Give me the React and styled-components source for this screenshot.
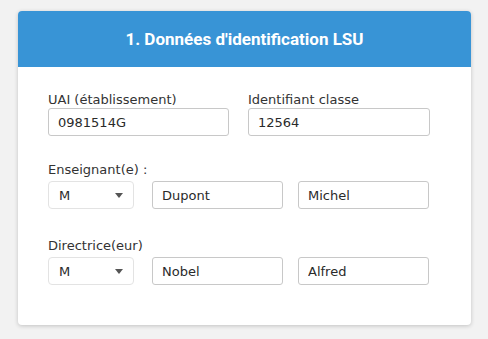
import React from "react";
import styled, { createGlobalStyle } from "styled-components";

const Global = createGlobalStyle`
  html, body { margin: 0; padding: 0; background: #f2f2f2; }
  body { font-family: "DejaVu Sans", Verdana, sans-serif; }
  * { box-sizing: border-box; }
`;

const Page = styled.div`
  padding: 11px 17px 13px 18px;
`;

const Card = styled.section`
  width: 453px;
  background: #fff;
  border-radius: 4px;
  overflow: hidden;
  box-shadow: 0 1px 4px rgba(0, 0, 0, 0.2);
`;

const Header = styled.h2`
  margin: 0;
  height: 56px;
  background: #3894d6;
  color: #fff;
  font-family: Roboto, "Liberation Sans", sans-serif;
  font-weight: 700;
  font-size: 17px;
  display: flex;
  align-items: center;
  justify-content: center;
`;

const Body = styled.div`
  padding: 25px 41px 40px 30px;
  display: flex;
  flex-direction: column;
`;

const Row = styled.div`
  display: grid;
  grid-template-columns: ${(p) => p.$cols};
  column-gap: ${(p) => p.$gap};
  align-items: end;
  margin-top: ${(p) => p.$top || "0px"};
`;

const Field = styled.div`
  display: flex;
  flex-direction: column;
  gap: 1px;
`;

const Label = styled.label`
  font-size: 13px;
  color: #333;
  line-height: 15px;
`;

const GroupLabel = styled(Label)`
  grid-column: 1 / -1;
  margin-bottom: 4px;
`;

const Input = styled.input`
  height: 28px;
  width: 100%;
  border: 1px solid #c8c8c8;
  border-radius: 3px;
  padding: 0 9px;
  font-family: "DejaVu Sans", Verdana, sans-serif;
  font-size: 13px;
  color: #2a2a2a;
  background: #fff;
  outline: none;
`;

const SelectBox = styled.div`
  width: 86px;
  height: 28px;
  border: 1px solid #e3e3e3;
  border-radius: 4px;
  padding: 0 10px;
  display: flex;
  align-items: center;
  justify-content: space-between;
  font-size: 13px;
  color: #2a2a2a;
`;

const Caret = styled.span`
  width: 0;
  height: 0;
  border-left: 4px solid transparent;
  border-right: 4px solid transparent;
  border-top: 5px solid #555;
`;

const Select = ({ value }) => (
  <SelectBox>
    <span>{value}</span>
    <Caret />
  </SelectBox>
);

export default function App() {
  return (
    <>
      <Global />
      <Page>
        <Card>
          <Header>1. Données d'identification LSU</Header>
          <Body>
            <Row $cols="181px 182px" $gap="19px">
              <Field>
                <Label>UAI (établissement)</Label>
                <Input readOnly value="0981514G" />
              </Field>
              <Field>
                <Label>Identifiant classe</Label>
                <Input readOnly value="12564" />
              </Field>
            </Row>
            <Row $cols="89px 131px 131px" $gap="15px" $top="26px">
              <GroupLabel>Enseignant(e) :</GroupLabel>
              <Select value="M" />
              <Input readOnly value="Dupont" />
              <Input readOnly value="Michel" />
            </Row>
            <Row $cols="89px 131px 131px" $gap="15px" $top="29px">
              <GroupLabel>Directrice(eur)</GroupLabel>
              <Select value="M" />
              <Input readOnly value="Nobel" />
              <Input readOnly value="Alfred" />
            </Row>
          </Body>
        </Card>
      </Page>
    </>
  );
}
